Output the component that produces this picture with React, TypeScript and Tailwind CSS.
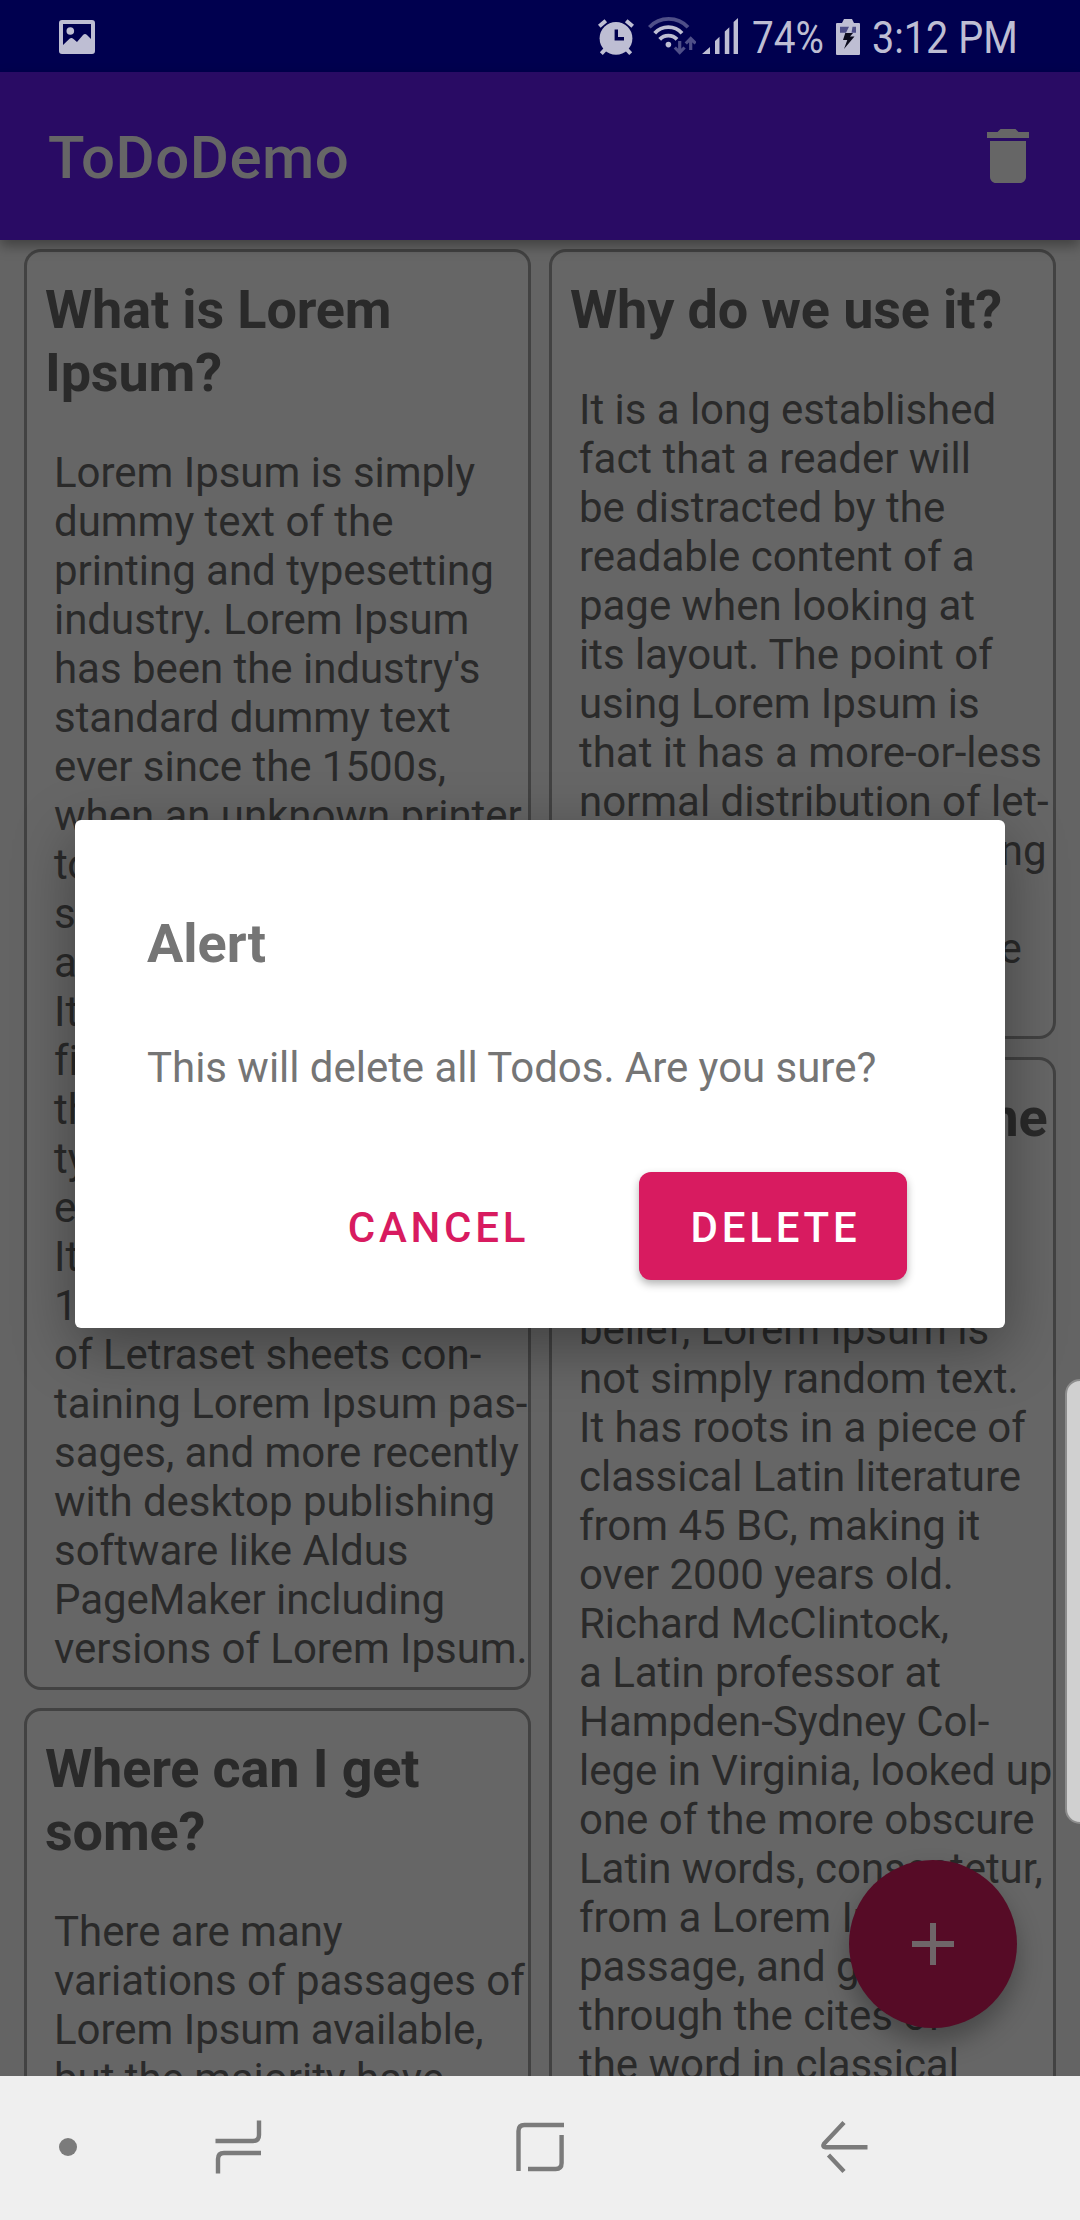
import React from "react";

type Todo = { title: string[]; body: string[] };

const leftColumn: Todo[] = [
  {
    title: ["What is Lorem", "Ipsum?"],
    body: [
      "Lorem Ipsum is simply",
      "dummy text of the",
      "printing and typesetting",
      "industry. Lorem Ipsum",
      "has been the industry's",
      "standard dummy text",
      "ever since the 1500s,",
      "when an unknown printer",
      "took a galley of type and",
      "scrambled it to make",
      "a type specimen book.",
      "It has survived not only",
      "five centuries, but also",
      "the leap into electronic",
      "typesetting, remaining",
      "essentially unchanged.",
      "It was popularised in the",
      "1960s with the release",
      "of Letraset sheets con-",
      "taining Lorem Ipsum pas-",
      "sages, and more recently",
      "with desktop publishing",
      "software like Aldus",
      "PageMaker including",
      "versions of Lorem Ipsum.",
    ],
  },
  {
    title: ["Where can I get", "some?"],
    body: [
      "There are many",
      "variations of passages of",
      "Lorem Ipsum available,",
      "but the majority have",
    ],
  },
];

const rightColumn: Todo[] = [
  {
    title: ["Why do we use it?"],
    body: [
      "It is a long established",
      "fact that a reader will",
      "be distracted by the",
      "readable content of a",
      "page when looking at",
      "its layout. The point of",
      "using Lorem Ipsum is",
      "that it has a more-or-less",
      "normal distribution of let-",
      "ters, as opposed to using",
      "'Content here, content",
      "here', making it look like",
      "readable English.",
    ],
  },
  {
    title: ["Where does it come", "from?"],
    body: [
      "Contrary to popular",
      "belief, Lorem Ipsum is",
      "not simply random text.",
      "It has roots in a piece of",
      "classical Latin literature",
      "from 45 BC, making it",
      "over 2000 years old.",
      "Richard McClintock,",
      "a Latin professor at",
      "Hampden-Sydney Col-",
      "lege in Virginia, looked up",
      "one of the more obscure",
      "Latin words, consectetur,",
      "from a Lorem Ipsum",
      "passage, and going",
      "through the cites of",
      "the word in classical",
    ],
  },
];

function TodoCard({ todo }: { todo: Todo }) {
  return (
    <article className="shrink-0 rounded-[17px] border-[3px] border-[#424242] bg-[#666666] pt-[26px] pb-[14px] text-[#2a2a2a] last:pb-24">
      <h2 className="pl-[18px] text-[54px] leading-[63px] font-bold tracking-[-0.15px] whitespace-pre">
        {todo.title.map((line) => (
          <span key={line} className="block">{line}</span>
        ))}
      </h2>
      <p className="mt-[44px] pl-[27px] text-[42px] leading-[49px] tracking-[-0.03px] whitespace-pre">
        {todo.body.map((line) => (
          <span key={line} className="block">{line}</span>
        ))}
      </p>
    </article>
  );
}

function StatusBar() {
  return (
    <div className="flex h-[72px] items-start bg-[#00004f] text-[#bebed3]">
      <svg className="mt-5 ml-[59px] h-[34px] w-9" viewBox="0 0 36 34">
        <path fillRule="evenodd" fill="currentColor" d="M3 0H33Q36 0 36 3V31Q36 34 33 34H3Q0 34 0 31V3Q0 0 3 0ZM4 4V25L10.5 18.8Q12.5 17.2 14.5 19L18 22L24 15Q26 13.2 28 15L32 19V4Z" />
        <circle cx="11.3" cy="11" r="3.8" fill="currentColor" />
      </svg>
      <div className="flex-1" />
      <svg className="mt-[19px] h-9 w-9" viewBox="0 0 36 36">
        <circle cx="18" cy="19.3" r="16.4" fill="currentColor" />
        <path d="M1.3 7.3L7.8 1.7M34.7 7.3L28.2 1.7M3.3 34.6L8 29.6M32.7 34.6L28 29.6" stroke="currentColor" strokeWidth="4" />
        <path d="M18.3 10.5V19.8H26" fill="none" stroke="#00004f" strokeWidth="3.4" />
      </svg>
      <svg className="mt-[17px] ml-[14px] h-[38px] w-12" viewBox="0 0 48 38">
        <g fill="none" strokeWidth="3.8">
          <path d="M1.3 10.3A26.6 26.6 0 0 1 40 10.3" stroke="#4f4f88" />
          <path d="M6.7 16.3A18.3 18.3 0 0 1 34 16.3" stroke="currentColor" />
          <path d="M11.7 22.4A11.7 11.7 0 0 1 29 22.4" stroke="currentColor" />
        </g>
        <circle cx="20.4" cy="27.6" r="2.8" fill="currentColor" />
        <path d="M31.7 24V35.5M26.8 30.5L31.7 35.5L36.6 30.5M42.7 33V22M37.8 26.5L42.7 21.5L47.6 26.5" fill="none" stroke="#4f4f88" strokeWidth="3.2" />
      </svg>
      <svg className="mt-[17px] ml-[6px] h-[37px] w-9" viewBox="0 0 36 37">
        <path fill="currentColor" d="M0 37L8 30V37ZM13 37V24L17.5 19.8V37ZM22.8 37V14.5L27.3 10.3V37ZM31.6 37V5L36 1V37Z" />
      </svg>
      <span className="ml-[14px] w-[84px] pt-[11px] text-[45px] leading-[53px] whitespace-pre">
        <span className="block origin-left scale-x-[0.86]">74%</span>
      </span>
      <svg className="mt-[19px] h-9 w-6" viewBox="0 0 24 36">
        <path fill="currentColor" d="M8 0H16L18 4H23Q24 4 24 5V35Q24 36 23 36H1Q0 36 0 35V5Q0 4 1 4H6Z" />
        <path fill="#4f4f88" d="M4 7.7H13L10 13.7H4ZM16.5 7.7H20V13.7H15.5Z" />
        <path fill="#0c0c1c" d="M9.3 14L7 21H11.3L8 30L18.5 17.6H14L17 14Z" />
      </svg>
      <span className="ml-[12px] w-[208px] pt-[11px] text-[45px] leading-[53px] whitespace-pre">
        <span className="block origin-left scale-x-[0.88]">3:12 PM</span>
      </span>
    </div>
  );
}

function NavBar() {
  return (
    <nav className="relative flex h-[144px] items-start bg-[#efefef] text-[#7b7b7b]">
      <span className="mt-[62px] ml-[59px] h-[18px] w-[18px] rounded-full bg-[#7b7b7b]" />
      <svg className="mt-[44px] ml-[138px] h-[54px] w-[47px]" viewBox="0 0 47 54">
        <path d="M0.5 21H38Q44 21 44 15V0.5M46 33H9Q3 33 3 39V53.5" fill="none" stroke="currentColor" strokeWidth="4.4" />
      </svg>
      <svg className="mt-[46px] ml-[254px] h-[50px] w-[49px]" viewBox="0 0 49 50">
        <path d="M2.5 49V9Q2.5 3 8.5 3H48M45.6 13V41Q45.6 47 39.6 47H12" fill="none" stroke="currentColor" strokeWidth="4.4" />
      </svg>
      <svg className="mt-[44px] ml-[255px] h-[54px] w-[48px]" viewBox="0 0 48 54">
        <path d="M24 2.5L4.2 23.5Q2 27 5.5 27.3H47.5M8.5 35L24 51.5" fill="none" stroke="currentColor" strokeWidth="4.4" />
      </svg>
    </nav>
  );
}

function AlertDialog() {
  return (
    <section className="absolute top-[820px] left-[75px] flex h-[508px] w-[930px] flex-col rounded-[6px] bg-white px-[72px] pt-[92px] text-[#757575] shadow-[0_18px_60px_0px_rgba(0,0,0,0.36)]">
      <h2 className="text-[54px] leading-[63px] font-bold">Alert</h2>
      <p className="mt-[68px] text-[42px] leading-[49px] tracking-[-0.03px] whitespace-pre">This will delete all Todos. Are you sure?</p>
      <div className="mt-[80px] -mr-[72px] flex items-center pr-[98px] text-[42px] font-medium tracking-[3.75px]">
        <button className="ml-auto h-[108px] w-[266px] pt-[2px] pl-[3px] text-center text-[#d81b60]">CANCEL</button>
        <button className="ml-[69px] h-[108px] w-[268px] rounded-[12px] bg-[#d81b60] pt-[2px] pl-[5px] text-center text-white shadow-[0_4px_8px_rgba(0,0,0,0.3)]">DELETE</button>
      </div>
    </section>
  );
}

export default function App() {
  return (
    <div className="relative flex h-[2220px] w-[1080px] flex-col overflow-hidden bg-[#646464] font-['Roboto',sans-serif]">
      <StatusBar />
      <header className="relative flex h-[168px] items-center justify-between bg-[#290b64] pr-9 pl-12 text-[#666666] shadow-[0_6px_12px_rgba(0,0,0,0.35)]">
        <h1 className="pt-1 text-[60px] leading-[70px] font-medium tracking-[0.5px]">ToDoDemo</h1>
        <svg className="h-[72px] w-[72px]" viewBox="0 0 24 24" fill="currentColor">
          <path d="M6 19c0 1.100.9 2 2 2h8c1.100 0 2-.9 2-2V7H6v12zM19 4h-3.500l-1-1h-5l-1 1H5v2h14V4z" />
        </svg>
      </header>
      <main className="grid min-h-0 flex-1 grid-cols-[507px_507px] gap-x-[18px] overflow-hidden pt-[9px] pl-6">
        {[leftColumn, rightColumn].map((column, i) => (
          <div key={i} className="flex min-h-0 flex-col gap-[18px]">
            {column.map((todo) => (
              <TodoCard key={todo.title[0]} todo={todo} />
            ))}
          </div>
        ))}
      </main>
      <button className="absolute top-[1860px] left-[849px] flex h-[168px] w-[168px] items-center justify-center rounded-full bg-[#560b26] text-[#6f6669] shadow-[0_14px_26px_rgba(0,0,0,0.3)]">
        <svg className="h-[72px] w-[72px]" viewBox="0 0 24 24" fill="currentColor">
          <path d="M19 13h-6v6h-2v-6H5v-2h6V5h2v6h6v2z" />
        </svg>
      </button>
      <AlertDialog />
      <div className="absolute top-[1379px] left-[1065px] h-[445px] w-[30px] rounded-[18px] border-2 border-[#8c8c8c] bg-[#d0d0d0]" />
      <NavBar />
    </div>
  );
}
